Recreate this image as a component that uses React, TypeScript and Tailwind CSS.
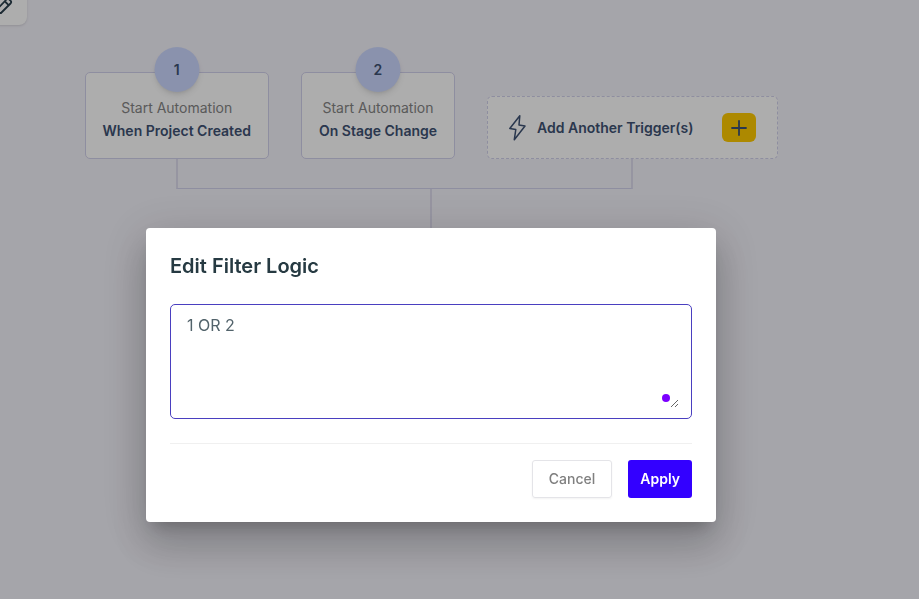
import { useState } from "react";

type Trigger = {
  order: number;
  label: string;
};

const triggers: Trigger[] = [
  { order: 1, label: "When Project Created" },
  { order: 2, label: "On Stage Change" },
];

function PencilIcon() {
  return (
    <svg className="w-5 h-5 overflow-visible" viewBox="0 0 20 20" fill="none" stroke="currentColor" strokeWidth="1.8" strokeLinejoin="round">
      <path d="M-4 18v-1.500L7.500 4.500a2 2 0 0 1 2.800 0l1.200 1.200a2 2 0 0 1 0 2.800L2 18z" />
      <path d="M6 6.500l3.600 3.600" />
    </svg>
  );
}

function BoltIcon() {
  return (
    <svg className="w-5 h-7" viewBox="0 0 20 28" fill="none" stroke="currentColor" strokeWidth="1.5" strokeLinejoin="round">
      <path d="M10.800 1.800L.8 14.500l6 1L5.300 25.700 16 12l-6-1z" />
    </svg>
  );
}

function TriggerCard({ trigger }: { trigger: Trigger }) {
  return (
    <div className="relative pt-[23px] pb-4 px-[17px] bg-white rounded-[5px] border border-[#d2d1ec] text-center text-sm">
      <span className="absolute -top-[26px] left-1/2 -translate-x-1/2 size-[45px] rounded-full bg-[#ccd8ff] shadow-md flex items-center justify-center font-semibold text-[#3e5273]">
        {trigger.order}
      </span>
      <p className="leading-[23px] text-[#858585]">Start Automation</p>
      <p className="leading-[23px] font-semibold text-[#3e5273]">{trigger.label}</p>
    </div>
  );
}

function FilterLogicDialog() {
  const [logic, setLogic] = useState("1 OR 2");

  return (
    <div className="fixed inset-0 bg-black/32 flex justify-center items-start pt-[228px] pr-[57px]">
      <div
        role="dialog"
        aria-modal="true"
        aria-labelledby="logic-title"
        className="w-full max-w-[570px] p-6 bg-white rounded shadow-[0_11px_15px_-7px_rgba(0,0,0,0.2),0_24px_38px_3px_rgba(0,0,0,0.14),0_9px_46px_8px_rgba(0,0,0,0.12)]"
      >
        <h2 id="logic-title" className="text-xl leading-7 font-semibold text-[#263a42]">
          Edit Filter Logic
        </h2>

        <div className="relative mt-6 px-3 pt-2 pb-2.5 border border-[#4a3fc0] rounded-[5px]">
          <textarea
            aria-labelledby="logic-title"
            value={logic}
            onChange={(e) => setLogic(e.target.value)}
            className="block w-full h-[95px] px-1 leading-6 text-base text-[#52636b] outline-none resize"
          />
          <span className="absolute right-[21px] bottom-4 size-2 rounded-full bg-[#7b00ff]" />
        </div>

        <div className="mt-6 pt-4 border-t border-[#f0f0f0] flex justify-end gap-4 text-sm">
          <button type="button" className="h-[38px] px-4 rounded-[3px] border border-[#e4e4e8] shadow-xs font-medium text-[#808080]">
            Cancel
          </button>
          <button type="button" className="h-[38px] px-3 rounded-[3px] bg-[#3300ff] font-semibold text-white">
            Apply
          </button>
        </div>
      </div>
    </div>
  );
}

export default function App() {
  return (
    <main className="relative min-h-screen bg-[#f4f3fb] font-['Inter',sans-serif]">
      {/* Toolbar corner */}
      <button type="button" aria-label="Edit" className="absolute -left-2 -top-4 w-[35px] h-[41px] pl-[7px] rounded-lg bg-white shadow-sm text-[#2a3f4c]">
        <PencilIcon />
      </button>

      <div className="flex flex-col items-center pt-[72px] pr-[57px]">
        <div>
          <div className="flex items-end gap-8">
            {triggers.map((t) => (
              <TriggerCard key={t.order} trigger={t} />
            ))}
            <div className="h-[63px] px-[21px] flex items-center bg-white rounded-[5px] border border-dashed border-[#d2d1ec] text-sm text-[#3e5273]">
              <BoltIcon />
              <span className="ml-2 mr-7 font-semibold">Add Another Trigger(s)</span>
              <button type="button" aria-label="Add trigger" className="w-[34px] h-[29px] rounded-md bg-[#ffcb00] flex items-center justify-center">
                <svg className="size-4" viewBox="0 0 16 16" stroke="currentColor" strokeWidth="1.8" strokeLinecap="round">
                  <path d="M8 1v14M1 8h14" />
                </svg>
              </button>
            </div>
          </div>

          {/* Connector lines */}
          <div className="ml-[91px] mr-[145px] h-[30px] border-x-2 border-b border-x-[#dedcee] border-b-[#d2d1ec]" />
          <div className="mx-auto w-0.5 h-20 bg-[#dedcee]" />
        </div>
      </div>

      <FilterLogicDialog />
    </main>
  );
}
